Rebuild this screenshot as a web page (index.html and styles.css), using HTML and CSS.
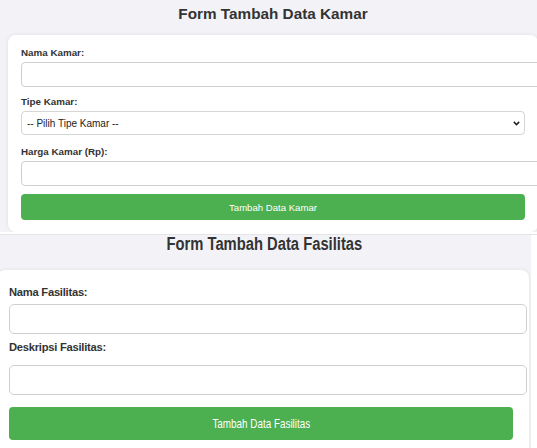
FILE: index.html
```html
<!DOCTYPE html>
<html lang="id">
<head>
<meta charset="utf-8">
<title>Form Tambah Data</title>
<link rel="stylesheet" href="styles.css">
</head>
<body>
  <section class="shot shot-kamar">
    <h2 class="title title-kamar">Form Tambah Data Kamar</h2>
    <form class="card card-kamar">
      <label class="lbl">Nama Kamar:</label>
      <input type="text" class="field field-k">
      <label class="lbl">Tipe Kamar:</label>
      <div class="select-wrap">
        <select class="field select-k">
          <option>-- Pilih Tipe Kamar --</option>
        </select>
        <svg class="chev" width="7" height="5" viewBox="0 0 7 5" aria-hidden="true">
          <path d="M0.8 0.9 L3.5 3.6 L6.2 0.9" fill="none" stroke="#222" stroke-width="1.5"/>
        </svg>
      </div>
      <label class="lbl">Harga Kamar (Rp):</label>
      <input type="text" class="field field-k">
      <button type="button" class="btn btn-k">Tambah Data Kamar</button>
    </form>
  </section>
  <div class="seam"></div>
  <section class="shot shot-fas">
    <h2 class="title title-fas"><span class="squeeze">Form Tambah Data Fasilitas</span></h2>
    <form class="card card-fas">
      <label class="lbl2 lbl2-first">Nama Fasilitas:</label>
      <input type="text" class="field field-f">
      <label class="lbl2 lbl2-second">Deskripsi Fasilitas:</label>
      <input type="text" class="field field-f">
      <button type="button" class="btn btn-f"><span class="squeeze-btn">Tambah Data Fasilitas</span></button>
    </form>
  </section>
</body>
</html>
```
FILE: styles.css
```css
* { box-sizing: content-box; }
html, body {
  margin: 0;
  padding: 0;
  background: #ffffff;
  overflow: hidden;
  font-family: "Liberation Sans", Arial, sans-serif;
  color: #333;
}

.shot {
  background: #f3f3f7;
  overflow: hidden;
}

/* ---------- Kamar ---------- */
.shot-kamar {
  height: 232px;
  padding-left: 8px;
}
.title {
  margin: 0;
  text-align: center;
  font-weight: bold;
}
.title-kamar {
  width: 530px;
  font-size: 15.3px;
  line-height: 18px;
  margin-top: 5px;
  margin-bottom: 12px;
}
.card {
  background: #fff;
  border-radius: 8px;
  box-shadow: 0 0 4px rgba(0, 0, 0, 0.08);
}
.card-kamar {
  width: 504px;
  padding: 12px 13px 12px 13px;
}
.lbl {
  display: block;
  font-size: 9.8px;
  font-weight: bold;
  line-height: 12px;
  margin-bottom: 3px;
}
.field {
  display: block;
  border: 1px solid #cfcfcf;
  border-radius: 4px;
  background: #fff;
  font-family: inherit;
  outline: none;
}
.field-k {
  width: 100%;
  height: 23px;
  padding: 0 8px;
  margin: 0 0 9px 0;
}
.select-wrap {
  position: relative;
  width: 504px;
  margin: 0 0 11px 0;
}
.select-k {
  -webkit-appearance: none;
  appearance: none;
  width: 504px;
  height: 24px;
  box-sizing: border-box;
  padding: 0 0 0 5px;
  margin: 0;
  font-size: 10px;
  color: #222;
  border-color: #d6d6d6;
}
.chev {
  position: absolute;
  right: 5px;
  top: 10px;
}
.btn {
  display: block;
  border: none;
  background: #4caf50;
  color: #fff;
  font-family: inherit;
  cursor: pointer;
  padding: 0;
}
.btn-k {
  width: 504px;
  height: 26px;
  margin-top: -1px;
  border-radius: 4px;
  font-size: 9.6px;
}

.seam {
  height: 2px;
  background: #fff;
  border-bottom: 1px solid #e4e4e8;
}

/* ---------- Fasilitas ---------- */
.shot-fas {
  width: 531px;
  height: 213px;
}
.title-fas {
  width: 528px;
  font-size: 18px;
  line-height: 20px;
  margin-top: -1px;
  margin-bottom: 16px;
}
.squeeze {
  display: inline-block;
  transform: scaleX(0.82);
  transform-origin: center;
  white-space: nowrap;
}
.card-fas {
  margin-left: -3px;
  width: 504px;
  padding: 16px 16px 20px 12px;
  border-radius: 8px;
}
.lbl2 {
  display: block;
  font-size: 11.2px;
  font-weight: bold;
  line-height: 13px;
  letter-spacing: -0.25px;
}
.lbl2-first { margin-bottom: 5px; }
.lbl2-second { margin-top: 7px; margin-bottom: 11px; }
.field-f {
  width: 100%;
  height: 28px;
  padding: 0 6px;
  border-radius: 5px;
  margin: 0;
}
.btn-f {
  width: 504px;
  height: 33px;
  margin-top: 12px;
  border-radius: 4px;
  font-size: 13px;
}
.squeeze-btn {
  display: inline-block;
  transform: scaleX(0.76);
  transform-origin: center;
  white-space: nowrap;
}
```
